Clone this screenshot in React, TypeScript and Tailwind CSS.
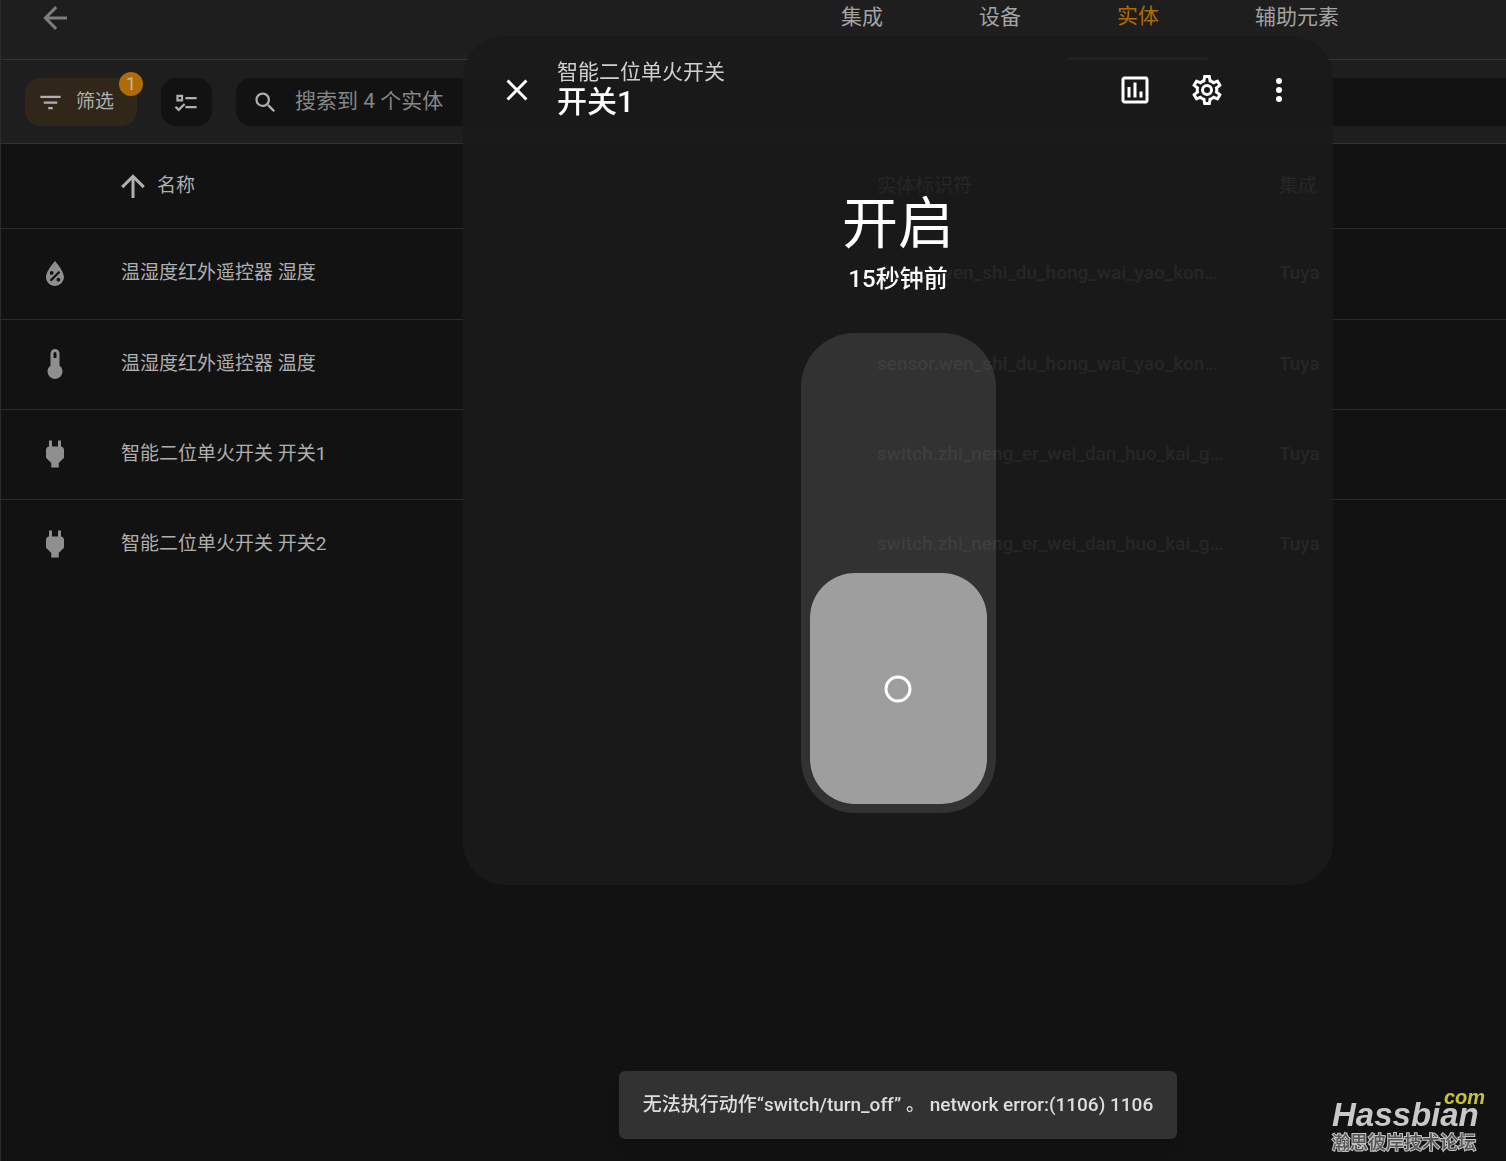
import React, { useState } from "react";

const icons = {
  arrowLeft: "M20,11V13H8L13.5,18.5L12.08,19.92L4.16,12L12.08,4.08L13.5,5.5L8,11H20Z",
  arrowUp: "M13,20H11V8L5.5,13.5L4.08,12.08L12,4.16L19.92,12.08L18.5,13.5L13,8V20Z",
  filter: "M6,13H18V11H6M3,6V8H21V6M10,18H14V16H10V18Z",
  checks:
    "M3,5H9V11H3V5M5,7V9H7V7H5M11,7H21V9H11V7M11,15H21V17H11V15M5,20L1.5,16.5L2.91,15.09L5,17.17L9.59,12.59L11,14L5,20Z",
  magnify:
    "M9.5,3A6.5,6.5 0 0,1 16,9.5C16,11.11 15.41,12.59 14.44,13.73L14.71,14H15.5L20.5,19L19,20.5L14,15.5V14.71L13.73,14.44C12.59,15.41 11.11,16 9.5,16A6.5,6.5 0 0,1 3,9.5A6.5,6.5 0 0,1 9.5,3M9.5,5C7,5 5,7 5,9.5C5,12 7,14 9.5,14C12,14 14,12 14,9.5C14,7 12,5 9.5,5Z",
  close:
    "M19,6.41L17.59,5L12,10.59L6.41,5L5,6.41L10.59,12L5,17.59L6.41,19L12,13.41L17.59,19L19,17.59L13.41,12L19,6.41Z",
  chart:
    "M9 17H7V10H9V17M13 17H11V7H13V17M17 17H15V13H17V17M19 19H5V5H19V19.1M19 3H5C3.9 3 3 3.9 3 5V19C3 20.1 3.9 21 5 21H19C20.1 21 21 20.1 21 19V5C21 3.9 20.1 3 19 3Z",
  cog: "M12,8A4,4 0 0,1 16,12A4,4 0 0,1 12,16A4,4 0 0,1 8,12A4,4 0 0,1 12,8M12,10A2,2 0 0,0 10,12A2,2 0 0,0 12,14A2,2 0 0,0 14,12A2,2 0 0,0 12,10M10,22C9.75,22 9.54,21.82 9.5,21.58L9.13,18.93C8.5,18.68 7.96,18.34 7.44,17.94L4.95,18.95C4.73,19.03 4.46,18.95 4.34,18.73L2.34,15.27C2.21,15.05 2.27,14.78 2.46,14.63L4.57,12.97L4.5,12L4.57,11L2.46,9.37C2.27,9.22 2.21,8.95 2.34,8.73L4.34,5.27C4.46,5.05 4.73,4.96 4.95,5.05L7.44,6.05C7.96,5.66 8.5,5.32 9.13,5.07L9.5,2.42C9.54,2.18 9.75,2 10,2H14C14.25,2 14.46,2.18 14.5,2.42L14.87,5.07C15.5,5.32 16.04,5.66 16.56,6.05L19.05,5.05C19.27,4.96 19.54,5.05 19.66,5.27L21.66,8.73C21.79,8.95 21.73,9.22 21.54,9.37L19.43,11L19.5,12L19.43,13L21.54,14.63C21.73,14.78 21.79,15.05 21.66,15.27L19.66,18.73C19.54,18.95 19.27,19.04 19.05,18.95L16.56,17.95C16.04,18.34 15.5,18.68 14.87,18.93L14.5,21.58C14.46,21.82 14.25,22 14,22H10M11.25,4L10.88,6.61C9.68,6.86 8.62,7.5 7.85,8.39L5.44,7.35L4.69,8.65L6.8,10.2C6.4,11.37 6.4,12.64 6.8,13.8L4.68,15.36L5.43,16.66L7.86,15.62C8.63,16.5 9.68,17.14 10.87,17.38L11.24,20H12.76L13.13,17.39C14.32,17.14 15.37,16.5 16.14,15.62L18.57,16.66L19.32,15.36L17.2,13.81C17.6,12.64 17.6,11.37 17.2,10.2L19.31,8.65L18.56,7.35L16.15,8.39C15.38,7.5 14.32,6.86 13.12,6.62L12.75,4H11.25Z",
  dots: "M12,16A2,2 0 0,1 14,18A2,2 0 0,1 12,20A2,2 0 0,1 10,18A2,2 0 0,1 12,16M12,10A2,2 0 0,1 14,12A2,2 0 0,1 12,14A2,2 0 0,1 10,12A2,2 0 0,1 12,10M12,4A2,2 0 0,1 14,6A2,2 0 0,1 12,8A2,2 0 0,1 10,6A2,2 0 0,1 12,4Z",
  humidity:
    "M12,3.25C12,3.25 6,10 6,14C6,17.32 8.69,20 12,20A6,6 0 0,0 18,14C18,10 12,3.25 12,3.25M14.47,9.97L15.53,11.03L9.53,17.03L8.47,15.97M9.75,10A1.25,1.25 0 0,1 11,11.25A1.25,1.25 0 0,1 9.75,12.5A1.25,1.25 0 0,1 8.5,11.25A1.25,1.25 0 0,1 9.75,10M14.25,14.5A1.25,1.25 0 0,1 15.5,15.75A1.25,1.25 0 0,1 14.25,17A1.25,1.25 0 0,1 13,15.75A1.25,1.25 0 0,1 14.25,14.5Z",
  thermometer:
    "M15 13V5A3 3 0 0 0 9 5V13A5 5 0 1 0 15 13M12 4A1 1 0 0 1 13 5V8H11V5A1 1 0 0 1 12 4Z",
  plug: "M16,7V3H14V7H10V3H8V7H8C7,7 6,8 6,9V14.5L9.5,18V21H14.5V18L18,14.5V9C18,8 17,7 16,7Z",
};

type IconName = keyof typeof icons;

function Icon({ name, className }: { name: IconName; className: string }) {
  return (
    <svg viewBox="0 0 24 24" fill="currentColor" fillRule="evenodd" className={className} aria-hidden="true">
      <path d={icons[name]} />
    </svg>
  );
}

const tabs = ["集成", "设备", "实体", "辅助元素"];

const entities: { icon: IconName; name: string; id: string; integration: string }[] = [
  { icon: "humidity", name: "温湿度红外遥控器 湿度", id: "sensor.wen_shi_du_hong_wai_yao_kong_qi_shi_du", integration: "Tuya" },
  { icon: "thermometer", name: "温湿度红外遥控器 温度", id: "sensor.wen_shi_du_hong_wai_yao_kong_qi_wen_du", integration: "Tuya" },
  { icon: "plug", name: "智能二位单火开关 开关1", id: "switch.zhi_neng_er_wei_dan_huo_kai_guan_switch_1", integration: "Tuya" },
  { icon: "plug", name: "智能二位单火开关 开关2", id: "switch.zhi_neng_er_wei_dan_huo_kai_guan_switch_2", integration: "Tuya" },
];

function Header() {
  return (
    <header className="flex h-[60px] justify-between border-b border-[#333333] bg-[#1e1e1e] pr-[119px] pl-9">
      <button aria-label="返回" className="flex h-9 items-center text-[#7b7b80]">
        <Icon name="arrowLeft" className="size-9" />
      </button>
      <nav className="-mb-px flex text-[21px]">
        {tabs.map((tab) => (
          <a
            key={tab}
            href="#"
            className={
              tab === "实体"
                ? "flex items-center border-b-[3px] border-[#b06c04] px-12 pb-6 text-[#b06c04]"
                : "flex items-center px-12 pb-6 text-[#a3a3a3]"
            }
          >
            {tab}
          </a>
        ))}
      </nav>
    </header>
  );
}

function Toolbar() {
  return (
    <div className="flex h-21 items-start gap-6 border-b border-[#333333] bg-[#1e1e1e] pt-[18px] pl-6">
      <button className="relative flex h-12 w-28 items-center gap-3 rounded-[15px] bg-[#30261a] pl-3 text-[19px] whitespace-nowrap text-[#b0b0b0]">
        <Icon name="filter" className="size-[27px]" />
        筛选
        <span className="absolute -top-1.5 -right-1.5 flex size-6 items-center justify-center rounded-full bg-[#b06c04] text-lg text-[#b8b8b8]">
          1
        </span>
      </button>
      <button
        aria-label="进入选择模式"
        className="flex h-12 w-[51px] items-center justify-center rounded-[15px] bg-[#121212] text-[#b0b0b0]"
      >
        <Icon name="checks" className="size-[27px]" />
      </button>
      <label className="flex h-12 flex-1 items-center gap-4 rounded-l-[15px] bg-[#121212] pl-4 text-[#b0b0b0]">
        <Icon name="magnify" className="size-[27px]" />
        <input
          type="text"
          aria-label="搜索"
          placeholder="搜索到 4 个实体"
          className="flex-1 bg-transparent text-[21px] outline-none placeholder:text-[#868686]"
        />
      </label>
    </div>
  );
}

function EntityTable() {
  return (
    <table className="w-full table-fixed text-left text-[19px] text-[#afafaf]">
      <colgroup>
        <col className="w-24" />
        <col />
        <col className="w-[402px]" />
        <col className="w-[251px]" />
      </colgroup>
      <thead>
        <tr className="h-[84px] border-b border-[#2b2b2b]">
          <th></th>
          <th className="px-6 font-normal">
            <span className="-ml-1.5 flex items-center gap-1.5">
              <Icon name="arrowUp" className="size-9" />
              名称
            </span>
          </th>
          <th className="px-6 font-normal">实体标识符</th>
          <th className="px-6 font-normal">集成</th>
        </tr>
      </thead>
      <tbody>
        {entities.map((entity) => (
          <tr key={entity.id} className="h-[90px] border-b border-[#2b2b2b] first:h-[91px] last:border-b-0">
            <td className="pl-9">
              <Icon name={entity.icon} className="size-9 text-[#8f8f8f]" />
            </td>
            <td className="truncate px-6">{entity.name}</td>
            <td className="truncate pr-7 pl-6 font-medium">{entity.id}</td>
            <td className="truncate px-6 font-medium">{entity.integration}</td>
          </tr>
        ))}
      </tbody>
    </table>
  );
}

function DialogButton({ icon, label }: { icon: IconName; label: string }) {
  return (
    <button aria-label={label} className="flex size-[72px] items-center justify-center">
      <Icon name={icon} className="size-9" />
    </button>
  );
}

function MoreInfoDialog() {
  const [on, setOn] = useState(false);

  return (
    <section
      role="dialog"
      aria-label="开关1"
      className="w-[870px] rounded-[42px] bg-[#1a1a1a]/92 pb-[72px] text-white"
    >
      <div className="flex h-[108px] items-center px-[18px]">
        <DialogButton icon="close" label="关闭" />
        <div className="ml-1 flex-1 pb-1.5">
          <p className="text-[21px] leading-[30px] text-[#d0d0d0]">智能二位单火开关</p>
          <h2 className="text-[30px] leading-[30px] font-medium">开关1</h2>
        </div>
        <DialogButton icon="chart" label="历史" />
        <DialogButton icon="cog" label="设置" />
        <DialogButton icon="dots" label="更多" />
      </div>

      <div className="flex flex-col items-center pt-[47px]">
        <p className="text-[56px] leading-[66px]">开启</p>
        <p className="mt-1 text-2xl leading-9 font-medium">15秒钟前</p>

        {/* Vertical toggle */}
        <button
          role="switch"
          aria-checked={on}
          aria-label="开关1"
          onClick={() => setOn(!on)}
          className={
            on
              ? "mt-9 flex h-[480px] w-[195px] items-start rounded-[54px] bg-[#9e9e9e]/19 p-[9px]"
              : "mt-9 flex h-[480px] w-[195px] items-end rounded-[54px] bg-[#9e9e9e]/19 p-[9px]"
          }
        >
          <span className="flex h-1/2 w-full items-center justify-center rounded-[45px] bg-[#9e9e9e]">
            <svg viewBox="0 0 24 24" fill="none" stroke="white" strokeWidth="2" className="size-9">
              <circle cx="12" cy="12" r="8" />
            </svg>
          </span>
        </button>
      </div>
    </section>
  );
}

function Watermark() {
  return (
    <div className="fixed right-[21px] bottom-2 w-[153px] font-['Liberation_Sans',sans-serif] font-bold">
      <p className="-mb-0.5 text-right text-xl leading-4 text-[#c4c43c] italic">com</p>
      <p className="text-[33px] leading-6 text-[#c8c8c8] italic">Hassbian</p>
      <p className="mt-0.5 font-['Noto_Sans_CJK_SC',sans-serif] text-lg leading-6 font-medium text-[#555555] [paint-order:stroke_fill] [-webkit-text-stroke:2px_#c4c4c4]">
        瀚思彼岸技术论坛
      </p>
    </div>
  );
}

export default function App() {
  return (
    <div className="min-h-screen border-l border-[#2b2b2b] bg-[#121212] font-['Roboto','Noto_Sans_CJK_SC',sans-serif]">
      <Header />
      <Toolbar />
      <EntityTable />

      <div className="fixed inset-0 flex flex-col items-center justify-between pt-9 pb-[22px] pl-[290px]">
        <MoreInfoDialog />
        <div
          role="status"
          className="rounded-md bg-[#323232] px-6 py-5 text-[19px] leading-7 font-medium text-[#dedede] shadow-lg"
        >
          无法执行动作“switch/turn_off” 。 network error:(1106) 1106
        </div>
      </div>

      <Watermark />
    </div>
  );
}
